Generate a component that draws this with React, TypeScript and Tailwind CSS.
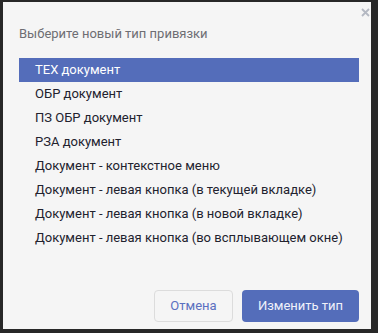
const items = [
  "ТЕХ документ",
  "ОБР документ",
  "ПЗ ОБР документ",
  "РЗА документ",
  "Документ - контекстное меню",
  "Документ - левая кнопка (в текущей вкладке)",
  "Документ - левая кнопка (в новой вкладке)",
  "Документ - левая кнопка (во всплывающем окне)",
];

export default function App() {
  const selected = 0;

  return (
    <div className="h-[333px] w-[378px] overflow-hidden bg-[#282828] pt-[2px] pl-[3px] font-['Roboto',sans-serif]">
      {/* dialog */}
      <div className="relative flex h-[327px] w-[368px] flex-col bg-[#f5f5f5] pt-[22px] pr-[12px] pl-[16px]">
        <button className="absolute top-[5px] right-[1px] flex h-[10px] w-[10px] items-center justify-center text-[#b4b8c2]">
          <svg width="9" height="9" viewBox="0 0 9 9">
            <path d="M1 1L8 8M8 1L1 8" stroke="currentColor" strokeWidth="1.8" />
          </svg>
        </button>

        <h2 className="h-[20px] text-[13px] leading-[20px] text-[#6e6e73]">
          Выберите новый тип привязки
        </h2>

        <ul className="mt-[14px]">
          {items.map((item, i) => (
            <li
              key={item}
              className={
                i === selected
                  ? "h-[24px] bg-[#546dba] pl-[16px] text-[13px] leading-[24px] text-white"
                  : "h-[24px] pl-[16px] text-[13px] leading-[24px] text-[#22222e]"
              }
            >
              {item}
            </li>
          ))}
        </ul>

        <div className="mt-[40px] flex justify-end gap-[9px]">
          <button className="h-[32px] w-[79px] rounded-[4px] border border-[#dcdcdc] text-[13px] text-[#5b70c0]">
            Отмена
          </button>
          <button className="h-[32px] w-[117px] rounded-[4px] bg-[#546dba] text-[13px] text-[#f0f2fa]">
            Изменить тип
          </button>
        </div>
      </div>
    </div>
  );
}
